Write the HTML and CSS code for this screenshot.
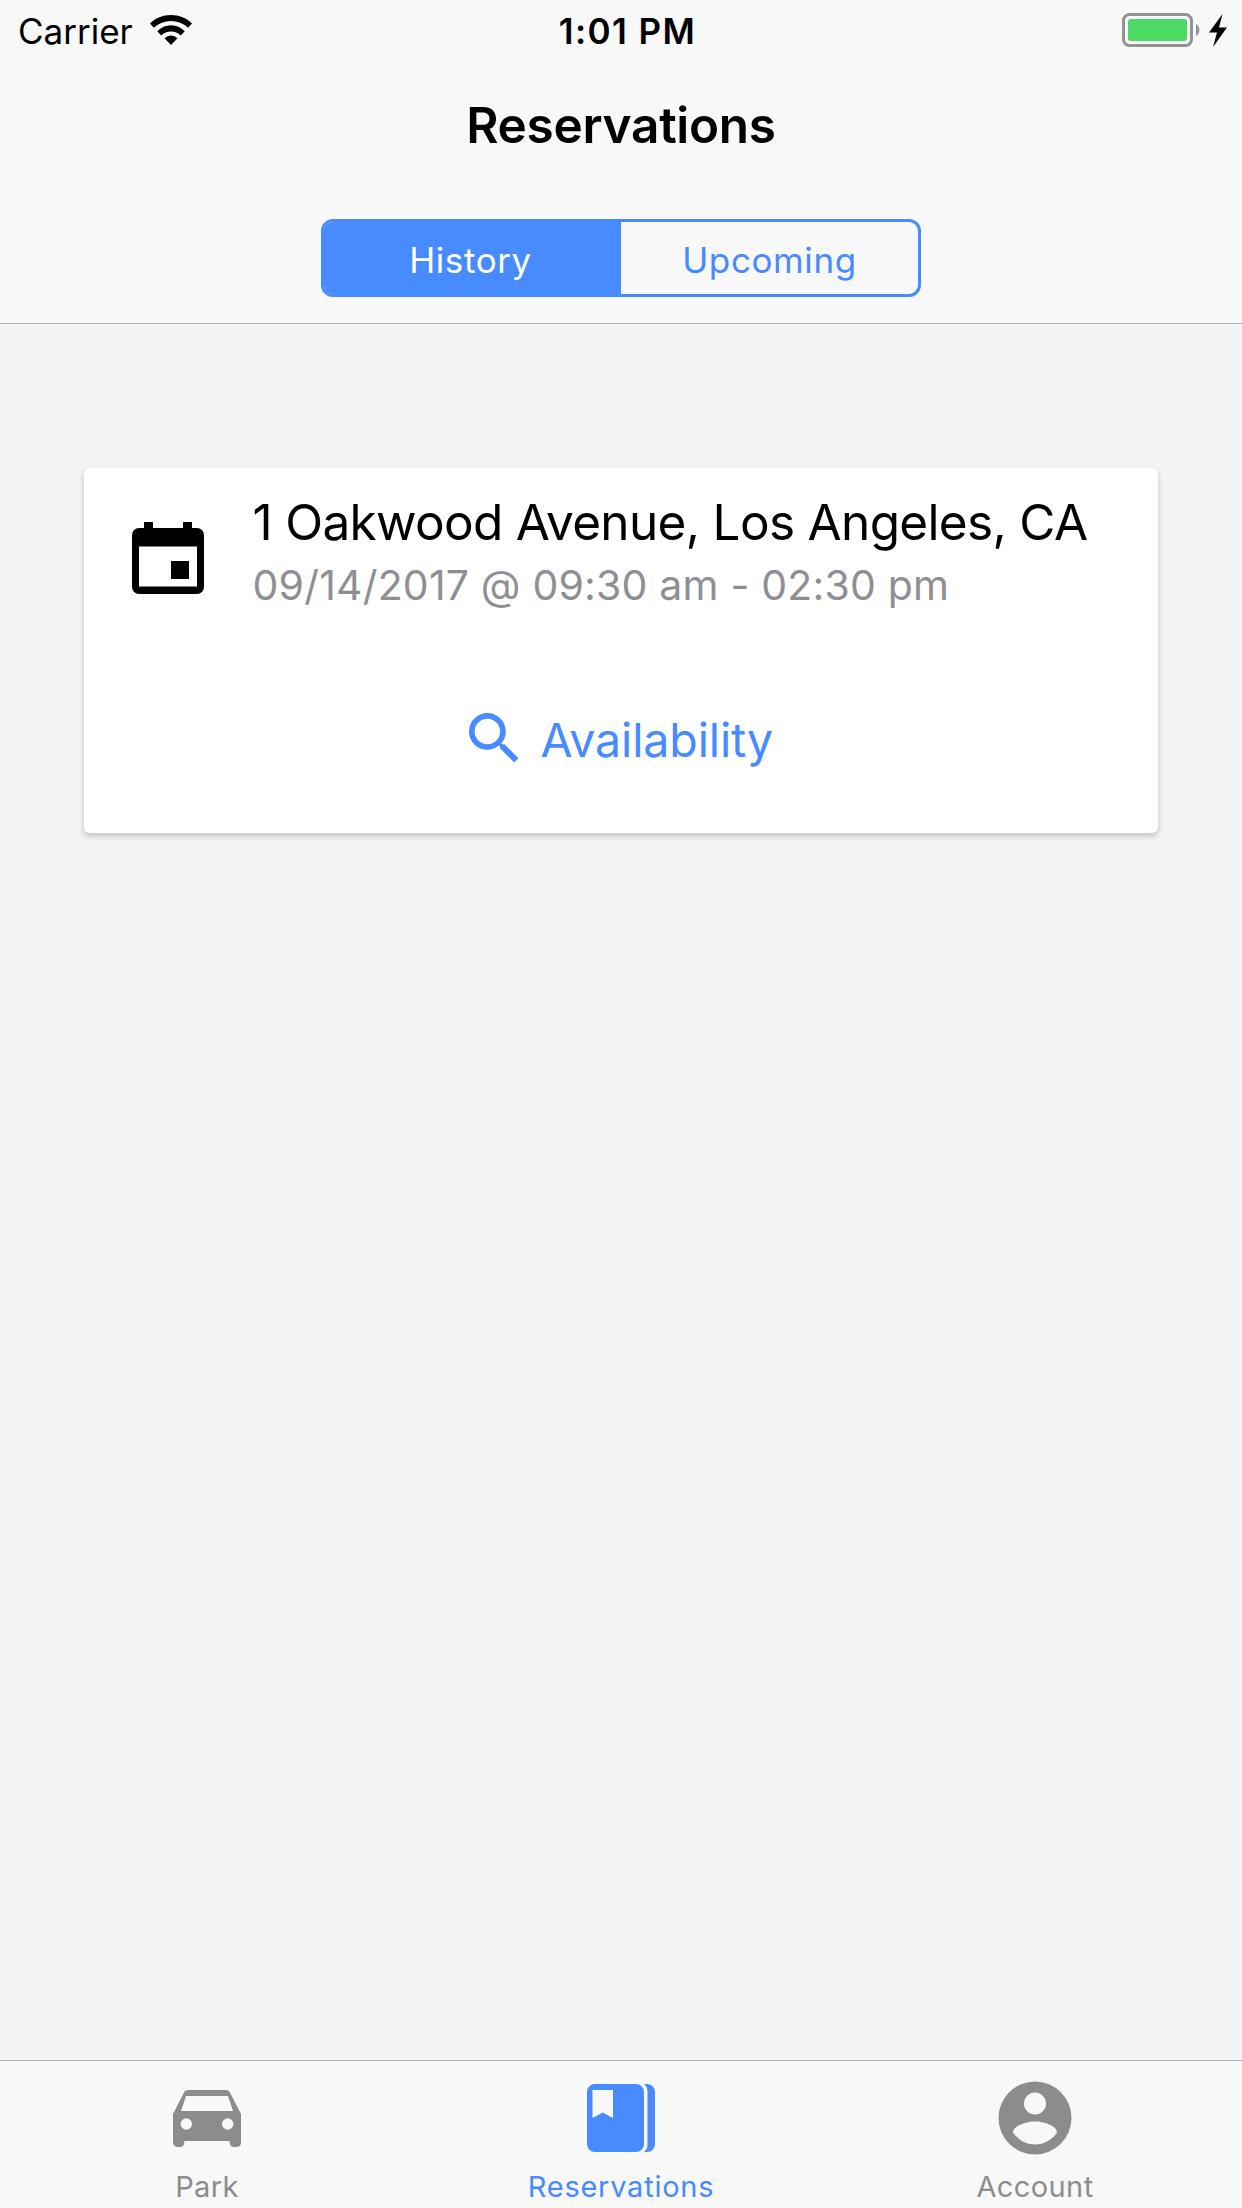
FILE: index.html
```html
<!DOCTYPE html>
<html lang="en">
<head>
<meta charset="utf-8">
<title>Reservations</title>
<link rel="stylesheet" href="styles.css">
</head>
<body>
<div class="app">
  <header class="header">
    <div class="status-bar">
      <div class="status-left">
        <span class="carrier">Carrier</span>
        <svg class="wifi" viewBox="0 0 42 30"><path d="M21 0C13 0 5.600 3 0 8.400L3.900 12.700A25.500 25.500 0 0 1 38.100 12.700L42 8.400C36.400 3 29 0 21 0Z"/><path d="M21 10.300A20 20 0 0 0 7.300 16.200L11.200 20.400A14 14 0 0 1 30.800 20.400L34.700 16.200A20 20 0 0 0 21 10.300Z"/><path d="M21 20.600A9 9 0 0 0 14.500 23.300L21 30L27.500 23.300A9 9 0 0 0 21 20.600Z"/></svg>
      </div>
      <span class="clock">1:01 PM</span>
      <div class="status-right">
        <svg class="battery" viewBox="0 0 78 34"><rect x="1.500" y="1.500" width="68" height="31" rx="6" fill="none" stroke="#929292" stroke-width="3"/><rect x="6" y="6" width="59" height="22" rx="3" fill="#4cd964"/><path d="M74 11a7 7 0 0 1 0 12z" fill="#929292"/></svg>
        <svg class="bolt" viewBox="0 0 18 33"><path d="M13.500 0L0 18.500H8L4 33L18 13.500H10Z"/></svg>
      </div>
    </div>
    <h1 class="title">Reservations</h1>
    <div class="segment">
      <button class="segment-button active">History</button>
      <button class="segment-button">Upcoming</button>
    </div>
  </header>
  <main class="content">
    <section class="card">
      <div class="item">
        <svg class="calendar" viewBox="0 0 72 72"><path fill-rule="evenodd" d="M12 0H21V6H51V0H60V6H65A7 7 0 0 1 72 13V65A7 7 0 0 1 65 72H7A7 7 0 0 1 0 65V13A7 7 0 0 1 7 6H12ZM7 24.500V64.500H65V24.500Z"/><path d="M39 39H57V57H39Z"/></svg>
        <div class="item-text">
          <h2 class="address">1 Oakwood Avenue, Los Angeles, CA</h2>
          <p class="date">09/14/2017 @ 09:30 am - 02:30 pm</p>
        </div>
      </div>
      <button class="availability">
        <svg class="search" viewBox="3 3 17.490 17.490"><path d="M15.500 14h-.79l-.28-.27C15.410 12.590 16 11.110 16 9.500 16 5.910 13.090 3 9.500 3S3 5.910 3 9.500 5.910 16 9.500 16c1.610 0 3.090-.59 4.230-1.570l.27.28v.79l5 4.990L20.490 19l-4.990-5zm-6 0C7.010 14 5 11.990 5 9.500S7.010 5 9.500 5 14 7.010 14 9.500 11.990 14 9.500 14z"/></svg>
        <span>Availability</span>
      </button>
    </section>
  </main>
  <nav class="tabs">
    <a class="tab">
      <svg class="icon" viewBox="0 0 74 74"><path fill-rule="evenodd" d="M60.500 12.500C59.800 10.500 58 9 55.800 9H18.200C16 9 14.200 10.500 13.500 12.500L3 33V61.500A5 5 0 0 0 7 66H10A4.500 4.500 0 0 0 14.300 61.500V60H59.700V61.500A4.500 4.500 0 0 0 64 66H67A4.500 4.500 0 0 0 71 61.500V33ZM16 15H58L63 30H11ZM16.300 37.300A5.700 5.700 0 1 0 16.300 48.700A5.700 5.700 0 1 0 16.300 37.300ZM57.700 37.300A5.700 5.700 0 1 0 57.700 48.700A5.700 5.700 0 1 0 57.700 37.300Z"/></svg>
      <span>Park</span>
    </a>
    <a class="tab active">
      <svg class="icon" viewBox="0 0 74 74"><path fill-rule="evenodd" d="M11 3H52A8 8 0 0 1 60 11V63A8 8 0 0 1 52 71H11A8 8 0 0 1 3 63V11A8 8 0 0 1 11 3ZM8.500 9V37L18.700 31.500L29 37V9Z"/><path d="M60 3H63A8 8 0 0 1 71 11V63A8 8 0 0 1 63 71H60Q63.500 68.500 63.500 63V11Q63.500 5.500 60 3Z"/></svg>
      <span>Reservations</span>
    </a>
    <a class="tab">
      <svg class="icon" viewBox="0 0 74 74"><path fill-rule="evenodd" d="M37 .5A36.500 36.500 0 1 0 37 73.500A36.500 36.500 0 1 0 37 .5ZM37 11.500A11 11 0 1 1 37 33.500A11 11 0 1 1 37 11.500ZM37 63.500C28 63.500 20 59 15 51.500C15.200 44 29.700 40.500 37 40.500S58.800 44 59 51.500C54 59 46 63.500 37 63.500Z"/></svg>
      <span>Account</span>
    </a>
  </nav>
</div>
</body>
</html>
```
FILE: styles.css
```css
* {
  box-sizing: border-box;
}

body {
  margin: 0;
  font-family: Inter, "Liberation Sans", sans-serif;
  color: #000;
  background: #f4f4f6;
}

svg {
  display: block;
  flex: none;
}

button {
  margin: 0;
  padding: 0;
  border: 0;
  background: none;
  font: inherit;
}

.app {
  display: flex;
  flex-direction: column;
  height: 2208px;
}

.header {
  height: 324px;
  background: #f8f8f8;
  border-bottom: 1px solid #b2b2b2;
}

.status-bar {
  display: grid;
  grid-template-columns: 1fr auto 1fr;
  align-items: start;
  height: 60px;
  padding: 0 15px 0 18px;
  font-size: 35px;
  line-height: 62px;
}

.status-left,
.status-right {
  display: flex;
}

.status-right {
  justify-content: flex-end;
  gap: 9px;
}

.wifi {
  width: 42px;
  height: 30px;
  margin: 15px 0 0 17px;
}

.clock {
  padding-left: 10px;
  font-weight: 600;
  letter-spacing: 1.400px;
}

.battery {
  width: 78px;
  height: 34px;
  margin-top: 13px;
}

.bolt {
  width: 18px;
  height: 33px;
  margin-top: 14px;
}

.title {
  height: 132px;
  margin: 0;
  font-size: 49.500px;
  font-weight: 600;
  letter-spacing: -0.280px;
  line-height: 130px;
  text-align: center;
}

.segment {
  display: flex;
  width: 600px;
  height: 78px;
  margin: 27px auto 0;
  border: 3px solid #488aff;
  border-radius: 12px;
  overflow: hidden;
}

.segment-button {
  flex: 0 0 50%;
  color: #488aff;
  font-size: 35px;
  letter-spacing: 0.600px;
  line-height: 76px;
}

.segment-button.active {
  padding-right: 4px;
  color: #fff;
  background: #488aff;
}

.content {
  flex: 1;
  padding: 144px 84px 0;
}

.card {
  height: 365px;
  padding-top: 24px;
  background: #fff;
  border-radius: 6px;
  box-shadow: 0 3px 6px rgba(0, 0, 0, 0.22);
}

.item {
  display: flex;
  gap: 48.500px;
  padding-left: 48px;
}

.calendar {
  width: 72px;
  height: 72px;
  margin-top: 30px;
}

.address {
  margin: 0;
  font-size: 49.500px;
  font-weight: 400;
  letter-spacing: -0.670px;
  line-height: 60px;
}

.date {
  margin: 6px 0 0;
  color: #8e8e93;
  font-size: 41px;
  letter-spacing: 0.190px;
  line-height: 54px;
}

.availability {
  display: flex;
  justify-content: center;
  width: 100%;
  gap: 22px;
  margin-top: 98px;
  color: #488aff;
  font-size: 46.500px;
  letter-spacing: -0.120px;
  line-height: 60px;
}

.search {
  width: 49.500px;
  height: 49.500px;
  margin-top: 3px;
  fill: #488aff;
}

.tabs {
  display: grid;
  grid-template-columns: repeat(3, 1fr);
  height: 148px;
  background: #f8f8f8;
  border-top: 1px solid #b2b2b2;
}

.tab {
  display: flex;
  flex-direction: column;
  align-items: center;
  padding-top: 20px;
  gap: 14px;
  color: #8c8c8c;
  fill: #8c8c8c;
  font-size: 29px;
  letter-spacing: 0.400px;
  line-height: 36px;
}

.tab.active {
  color: #488aff;
  fill: #488aff;
  letter-spacing: 0.750px;
}

.icon {
  width: 74px;
  height: 74px;
}
```
